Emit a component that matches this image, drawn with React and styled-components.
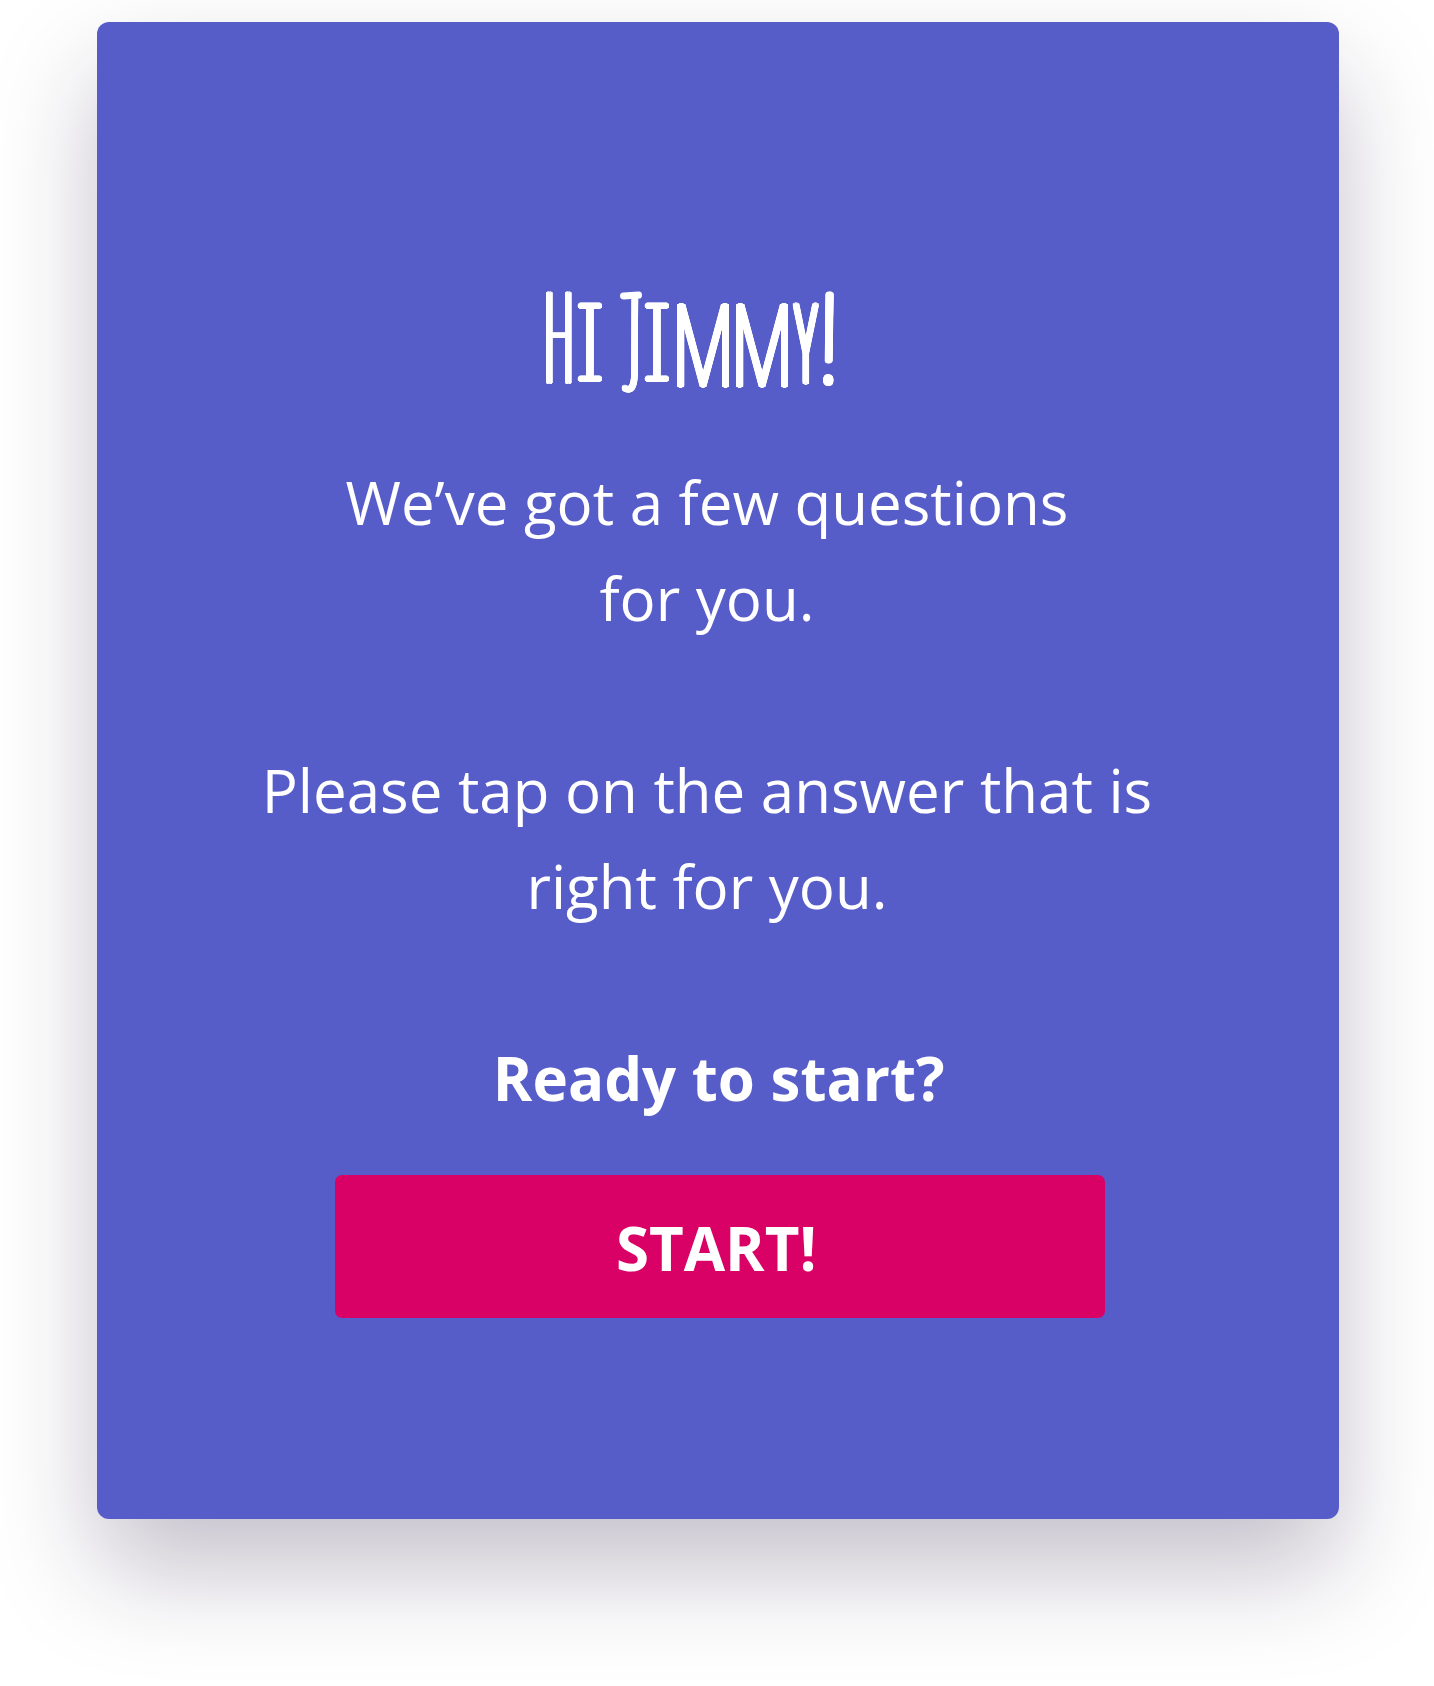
import React from 'react';
import styled, { createGlobalStyle } from 'styled-components';

const Global = createGlobalStyle`
  * { box-sizing: border-box; }
  body { margin: 0; background: #fff; overflow: hidden; }
`;

const Page = styled.main`
  height: 1686px;
  padding: 22.4px 94.7px 0 97.2px;
  overflow: hidden;
  font-family: "Open Sans", sans-serif;
`;

const Card = styled.section`
  display: flex;
  flex-direction: column;
  align-items: center;
  height: 1496.8px;
  padding-top: 246.6px;
  border-radius: 12px;
  background: #575dc8;
  color: #fff;
  box-shadow: 0 52px 104px rgba(29, 7, 52, 0.25);
`;

const Title = styled.h1`
  display: flex;
  align-items: baseline;
  width: 288px;
  height: 132px;
  margin: 0 56px 0 0;
  font: 100 126px/132px "Noto Sans", "Open Sans", sans-serif;
`;

/* Rounds and thickens a hairline letter by repeating it around an ellipse. */
const penStroke = (rx, ry, scale) =>
  Array.from({ length: 20 }, (_, i) => {
    const a = (i / 20) * Math.PI * 2;
    return `${((Math.cos(a) * rx) / scale).toFixed(2)}px ${(Math.sin(a) * ry).toFixed(2)}px 0 #fff`;
  }).join(', ');

const Cell = styled.span`
  position: relative;
  display: flex;
  flex: none;
  justify-content: center;
  width: ${p => p.$w}px;
  margin-left: ${p => p.$gap || 0}px;
`;

const Letter = styled.span`
  flex: none;
  font-size: ${p => p.$size}px;
  transform: translate(${p => p.$dx || 0}px, ${p => p.$dy || 0}px) scaleX(${p => p.$scale}) rotate(${p => p.$tilt || 0}deg);
  text-shadow: ${p => penStroke(p.$rx, p.$ry, p.$scale)};
`;

/* The bar across the top of the J, lying over the stem. */
const Serif = styled.span`
  position: absolute;
  top: 16px;
  left: 0;
  width: 22px;
  height: 6.5px;
  border-radius: 4px;
  background: #fff;
  transform: rotate(-3deg);
`;

const letters = [
  { c: 'H', w: 25.7, size: 126.6, scale: 0.315, rx: 2.7, ry: 0.9, dy: -0.8 },
  { c: 'i', w: 25.3, gap: 5.5, size: 105, scale: 1.18, rx: 2, ry: 1.8, dy: -4 },
  { c: ' ', w: 17.5 },
  { c: 'J', w: 22, size: 109, scale: 0.42, rx: 2.7, ry: 1.8, dx: 3, dy: -12, tilt: 0.5, serif: true },
  { c: 'i', w: 25.8, gap: 2.2, size: 105, scale: 1.18, rx: 2, ry: 1.8, dy: -4 },
  { c: 'm', w: 53, gap: 6, size: 112.6, scale: 0.66, rx: 2.6, ry: 1.8, dy: 2 },
  { c: 'm', w: 53, gap: 6, size: 112.6, scale: 0.66, rx: 2.6, ry: 1.8, dy: 2 },
  { c: 'y', w: 26.3, gap: 4.4, size: 110, scale: 0.375, rx: 2.7, ry: 1.8, dy: -1 },
  { c: '!', w: 11, gap: 4.5, size: 125, scale: 0.8, rx: 2.6, ry: 2, dy: -1, tilt: 1 },
];

const Message = styled.p`
  margin: 53px 22.6px 0 0;
  font-size: 60px;
  line-height: 96px;
  text-align: center;
  white-space: pre-line;
`;

const Prompt = styled.strong`
  margin: 96px 0 0 1px;
  font-size: 60px;
  line-height: 96px;
`;

const StartButton = styled.button`
  width: 770px;
  height: 143px;
  margin: 49px 0 0 3px;
  padding: 4px 7px 0 0;
  border: 0;
  border-radius: 7px;
  background: #d90066;
  color: #fff;
  font: 700 60px/96px "Open Sans", sans-serif;
`;

export default function App() {
  return (
    <>
      <Global />
      <Page>
        <Card>
          <Title>
            {letters.map((l, i) => (
              <Cell key={i} $w={l.w} $gap={l.gap}>
                {l.size ? (
                  <Letter $size={l.size} $scale={l.scale} $rx={l.rx} $ry={l.ry} $dx={l.dx} $dy={l.dy} $tilt={l.tilt}>
                    {l.c.toUpperCase()}
                  </Letter>
                ) : l.c}
                {l.serif && <Serif />}
              </Cell>
            ))}
          </Title>
          <Message>{"We’ve got a few questions\nfor you.\n\nPlease tap on the answer that is\nright for you."}</Message>
          <Prompt>Ready to start?</Prompt>
          <StartButton>START!</StartButton>
        </Card>
      </Page>
    </>
  );
}
